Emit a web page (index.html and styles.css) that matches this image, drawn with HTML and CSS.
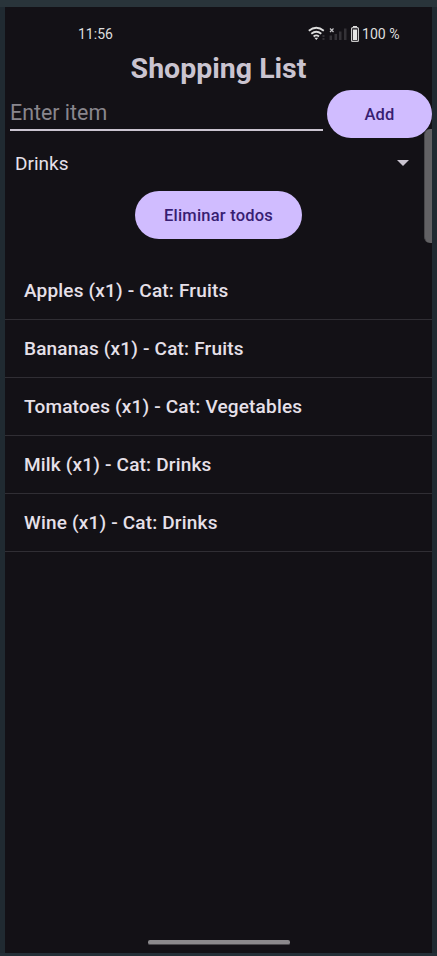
FILE: index.html
```html
<!DOCTYPE html>
<html lang="en">
<head>
<meta charset="utf-8">
<title>Shopping List</title>
<link rel="stylesheet" href="styles.css">
</head>
<body>
<main class="phone">
  <header class="status">
    <span class="time">11:56</span>
    <svg class="status-icons" width="52" height="18" viewBox="0 0 52 18">
      <g fill="none" stroke="#dedede" stroke-width="1.8">
        <path d="M.8 5.800Q8.300 -.2 15.800 5.800"/>
        <path d="M3.300 8.800Q8.300 4.800 13.300 8.800"/>
        <path d="M5.600 11.500Q8.300 9.300 11 11.500"/>
      </g>
      <path d="M6.400 12.700h3.800L8.300 15z" fill="#dedede"/>
      <path d="M14.500 10h2v2h-2zm0 3h2v2h-2z" fill="#343237"/>
      <path d="M22 3.500l3.500 3.500M25.500 3.500L22 7" stroke="#c4c3c6" stroke-width="1.200"/>
      <path d="M21.500 10.500H24V15h-2.500zM26.500 9H29v6h-2.500zM31 6.500h2.500V15H31zM36 3.500h2.500V15H36z" fill="#343237"/>
      <path d="M45 1h4v2h-4z" fill="#dedede"/>
      <rect x="43.600" y="2.600" width="6.800" height="13.800" rx="1" fill="none" stroke="#c9c9c9" stroke-width="1.200"/>
      <path d="M45 4.500h4V15h-4z" fill="#e6e6e6"/>
    </svg>
    <span class="charge">100 %</span>
  </header>
  <h1 class="title">Shopping List</h1>
  <form class="entry">
    <input class="field" type="text" placeholder="Enter item" aria-label="Enter item">
    <button class="button add" type="button">Add</button>
  </form>
  <div class="category">
    <span>Drinks</span>
    <svg width="12" height="6" viewBox="0 0 12 6"><path d="M0 0h12L6 6z" fill="#cac4d0"/></svg>
  </div>
  <button class="button clear" type="button">Eliminar todos</button>
  <ul class="items">
    <li class="item">Apples (x1) - Cat: Fruits</li>
    <li class="item">Bananas (x1) - Cat: Fruits</li>
    <li class="item">Tomatoes (x1) - Cat: Vegetables</li>
    <li class="item">Milk (x1) - Cat: Drinks</li>
    <li class="item">Wine (x1) - Cat: Drinks</li>
  </ul>
  <div class="edge-handle"></div>
  <div class="home-bar"></div>
</main>
</body>
</html>
```
FILE: styles.css
```css
* { box-sizing: border-box; }

body {
  margin: 0;
  height: 956px;
  padding: 7px 5px 3px;
  background: linear-gradient(#29343a 0 7px, #202a31 7px 953px, #242f37 953px);
  font-family: Roboto, "Liberation Sans", sans-serif;
  overflow: hidden;
}

.phone {
  position: relative;
  display: flex;
  flex-direction: column;
  width: 427px;
  height: 946px;
  background: #131116;
  color: #e6e0e9;
}

.status {
  display: flex;
  align-items: center;
  height: 40px;
  padding: 14px 0 0 73px;
  color: #dedede;
  font-size: 14px;
}

.time { width: 230px; }
.status-icons { flex: none; margin-bottom: 1px; }
.charge { margin-left: 2px; font-size: 14.100px; white-space: nowrap; }

.title {
  height: 43px;
  margin: 0;
  color: #cac4d0;
  font-size: 28.500px;
  font-weight: 700;
  line-height: 43px;
  text-align: center;
}

.entry { display: flex; height: 48px; }

.field {
  width: 313px;
  height: 41px;
  margin: 0 4px 0 5px;
  padding: 6px 0 0;
  border: 0;
  border-bottom: 2px solid #cac4d0;
  background: transparent;
  color: #e6e0e9;
  font: 21.400px Roboto, "Liberation Sans", sans-serif;
}

.field::placeholder { color: #89868d; opacity: 1; }

.button {
  height: 48px;
  padding: 0;
  border: 0;
  border-radius: 24px;
  background: #d0bcff;
  color: #381e72;
  font: 500 16.500px Roboto, "Liberation Sans", sans-serif;
  letter-spacing: .2px;
}

.add { width: 105px; }

.category {
  display: flex;
  align-items: center;
  justify-content: space-between;
  height: 53px;
  padding: 0 23px 3px 10px;
  font-size: 19px;
}

.clear { align-self: center; flex: none; width: 167px; }

.items { margin: 23px 0 0; padding: 0; list-style: none; }

.item {
  display: flex;
  align-items: center;
  height: 58px;
  padding: 0 0 1px 19px;
  border-bottom: 1px solid #302e34;
  font-size: 19px;
  font-weight: 500;
  letter-spacing: .18px;
}

.edge-handle {
  position: absolute;
  top: 122px;
  right: 0;
  width: 8px;
  height: 114px;
  border-left: 1px solid #49484b;
  border-radius: 6px 0 0 6px;
  background: #626164;
}

.home-bar {
  width: 142px;
  height: 5px;
  margin: auto auto 8px;
  border-bottom: 1px solid #4c4a4e;
  border-radius: 2px;
  background: #8b898c;
}
```
